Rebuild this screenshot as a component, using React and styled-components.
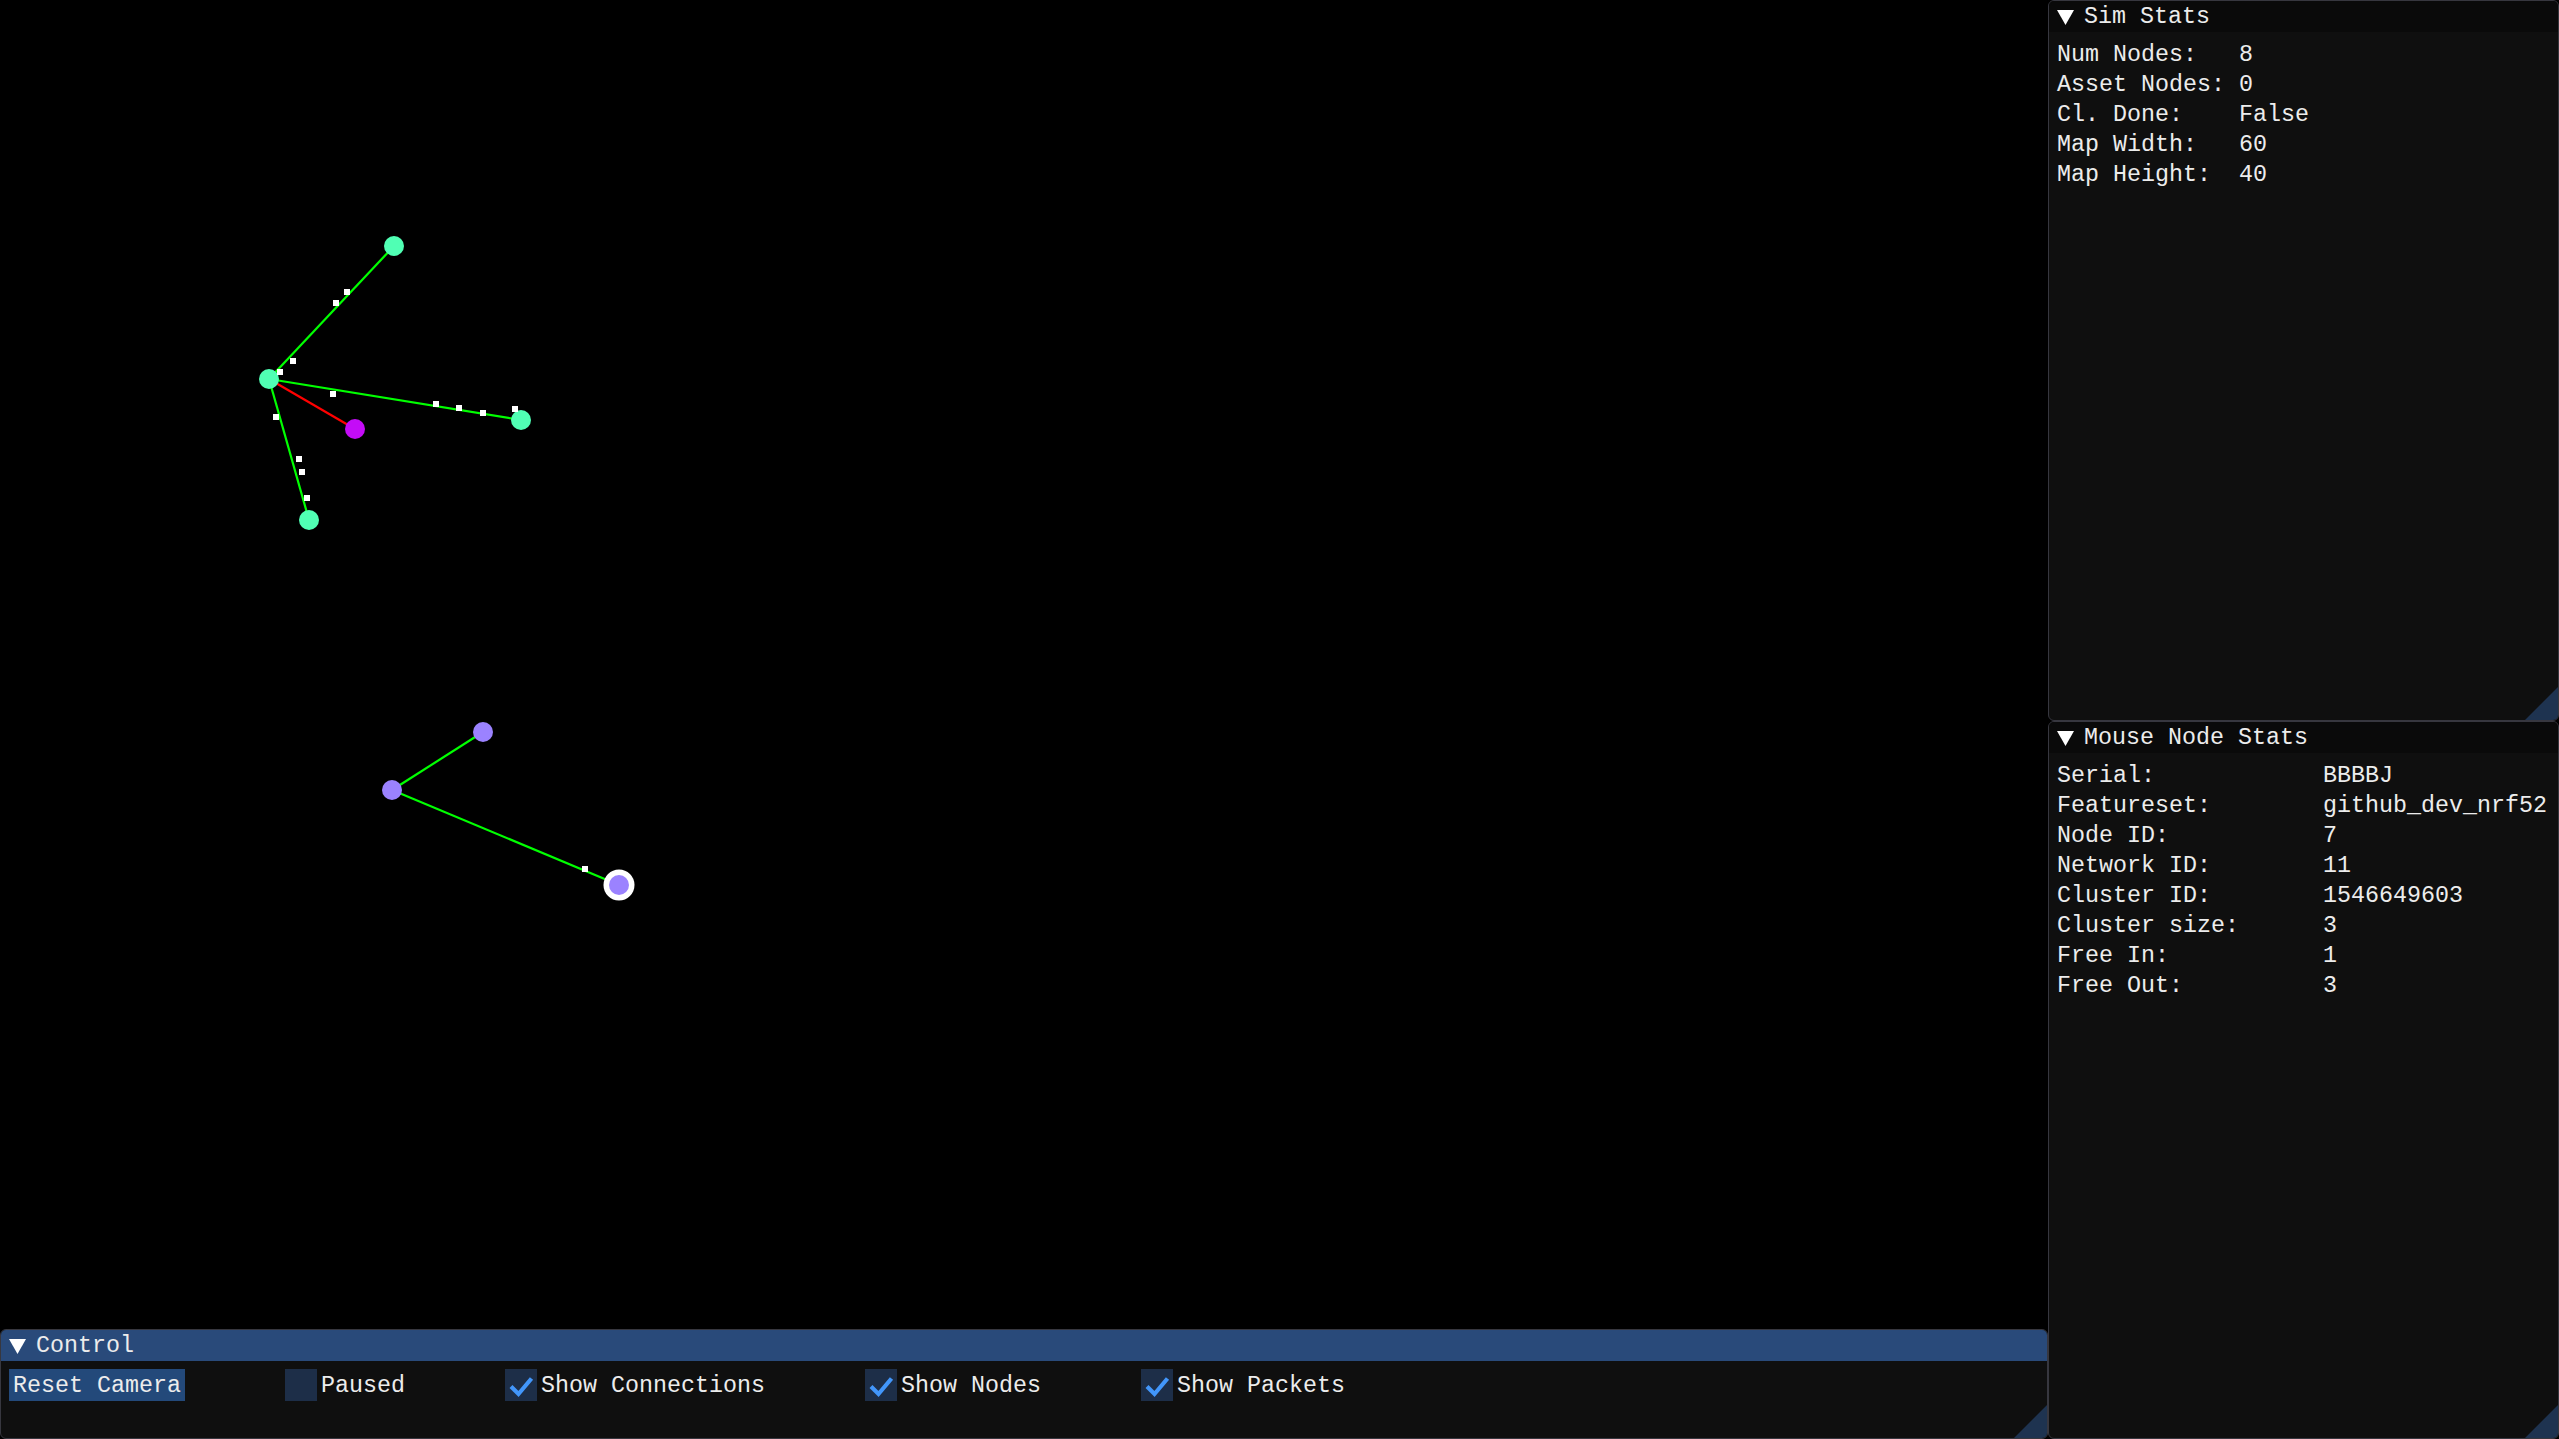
import React from 'react';
import styled, { createGlobalStyle } from 'styled-components';

const GlobalStyle = createGlobalStyle`
  html, body {
    margin: 0;
    padding: 0;
    background: #000;
    overflow: hidden;
  }
  body {
    font-family: "Liberation Mono", "DejaVu Sans Mono", monospace;
    font-size: 23.33px;
    color: #ececec;
  }
`;

const Screen = styled.div`
  width: 2559px;
  height: 1439px;
  display: grid;
  grid-template-columns: 2048px 511px;
  background: #000;
`;

const LeftColumn = styled.div`
  display: flex;
  flex-direction: column;
  min-height: 0;
`;

const RightColumn = styled.div`
  display: grid;
  grid-template-rows: 721px 718px;
`;

const Canvas = styled.div`
  flex: 1;
  background: #000;
  overflow: hidden;
  svg {
    display: block;
  }
`;

const Panel = styled.section`
  position: relative;
  background: #0f0f0f;
  border: 1px solid #37373f;
  border-radius: 6px;
  overflow: hidden;
  box-sizing: border-box;
  height: ${(p) => p.$height || '100%'};

  &::after {
    content: '';
    position: absolute;
    right: 0;
    bottom: 0;
    width: 33px;
    height: 33px;
    background: #1e3350;
    clip-path: polygon(100% 0, 100% 100%, 0 100%);
  }
`;

const TitleBar = styled.header`
  height: 31px;
  display: flex;
  align-items: center;
  gap: 10px;
  padding-left: 8px;
  padding-top: 1px;
  box-sizing: border-box;
  background: ${(p) => (p.$active ? '#294a7a' : '#0a0a0a')};
  white-space: pre;
`;

const Arrow = () => (
  <svg width="17" height="15" viewBox="0 0 17 15">
    <polygon points="0,0 17,0 8.5,15" fill="#ffffff" />
  </svg>
);

const StatsBody = styled.div`
  padding: 8px 8px;
  display: grid;
  grid-template-columns: ${(p) => p.$labelCh}ch auto;
  grid-auto-rows: 30px;
  align-items: center;
  white-space: pre;
`;

const ControlBody = styled.div`
  display: flex;
  align-items: center;
  gap: 100px;
  padding: 8px 8px;
`;

const Button = styled.button`
  height: 32px;
  padding: 2px 4px 0;
  border: none;
  background: #23497a;
  color: #ececec;
  font: inherit;
  white-space: pre;
`;

const CheckRow = styled.label`
  display: flex;
  align-items: center;
  gap: 4px;
  padding-top: 2px;
  white-space: pre;
`;

const Box = styled.span`
  width: 32px;
  height: 32px;
  margin-top: -2px;
  background: #1d2e48;
  display: block;
  svg {
    display: block;
  }
`;

const Check = () => (
  <svg width="32" height="32" viewBox="0 0 32 32">
    <polyline points="6,17.5 13.5,25 26.5,9.5" fill="none" stroke="#4296fa" strokeWidth="4.2" />
  </svg>
);

const Checkbox = ({ label, checked }) => (
  <CheckRow>
    <Box>{checked && <Check />}</Box>
    {label}
  </CheckRow>
);

const mint = '#50ffb4';
const purple = '#9b82ff';

const packets = [
  [346.7, 292], [336, 302.7], [292.7, 360.7], [280, 371.7], [333, 393.7],
  [436, 403.7], [458.7, 407.7], [482.7, 412.7], [515, 408.7], [276, 416.7],
  [299, 458.7], [301.7, 471.7], [306.7, 497.7], [585, 868.7],
];

const Graph = () => (
  <svg width="2048" height="1329" viewBox="0 0 2048 1329" shapeRendering="crispEdges">
    <g strokeWidth="2.2" shapeRendering="auto">
      <line x1="269" y1="379" x2="394" y2="246" stroke="#00ff00" />
      <line x1="269" y1="379" x2="521" y2="420" stroke="#00ff00" />
      <line x1="269" y1="379" x2="309" y2="520" stroke="#00ff00" />
      <line x1="269" y1="379" x2="355" y2="429" stroke="#ff0000" />
      <line x1="392" y1="790" x2="483" y2="732" stroke="#00ff00" />
      <line x1="392" y1="790" x2="619" y2="885" stroke="#00ff00" />
    </g>
    <g shapeRendering="auto">
      <circle cx="394" cy="246" r="10" fill={mint} />
      <circle cx="269" cy="379" r="10" fill={mint} />
      <circle cx="521" cy="420" r="10" fill={mint} />
      <circle cx="309" cy="520" r="10" fill={mint} />
      <circle cx="355" cy="429" r="10" fill="#c40cf7" />
      <circle cx="483" cy="732" r="10" fill={purple} />
      <circle cx="392" cy="790" r="10" fill={purple} />
      <circle cx="619" cy="885" r="15.5" fill="#ffffff" />
      <circle cx="619" cy="885" r="10" fill={purple} />
    </g>
    {packets.map(([x, y], i) => (
      <rect key={i} x={x - 3} y={y - 3} width="6" height="6" fill="#ffffff" />
    ))}
  </svg>
);

const simStats = [
  ['Num Nodes:', '8'],
  ['Asset Nodes:', '0'],
  ['Cl. Done:', 'False'],
  ['Map Width:', '60'],
  ['Map Height:', '40'],
];

const nodeStats = [
  ['Serial:', 'BBBBJ'],
  ['Featureset:', 'github_dev_nrf52'],
  ['Node ID:', '7'],
  ['Network ID:', '11'],
  ['Cluster ID:', '1546649603'],
  ['Cluster size:', '3'],
  ['Free In:', '1'],
  ['Free Out:', '3'],
];

const StatRows = ({ rows }) =>
  rows.map(([k, v]) => (
    <React.Fragment key={k}>
      <span>{k}</span>
      <span>{v}</span>
    </React.Fragment>
  ));

const App = () => {
  return (
    <>
      <GlobalStyle />
      <Screen>
        <LeftColumn>
          <Canvas>
            <Graph />
          </Canvas>
          <Panel $height="110px">
            <TitleBar $active>
              <Arrow />
              Control
            </TitleBar>
            <ControlBody>
              <Button>Reset Camera</Button>
              <Checkbox label="Paused" />
              <Checkbox label="Show Connections" checked />
              <Checkbox label="Show Nodes" checked />
              <Checkbox label="Show Packets" checked />
            </ControlBody>
          </Panel>
        </LeftColumn>
        <RightColumn>
          <Panel>
            <TitleBar>
              <Arrow />
              Sim Stats
            </TitleBar>
            <StatsBody $labelCh={13}>
              <StatRows rows={simStats} />
            </StatsBody>
          </Panel>
          <Panel>
            <TitleBar>
              <Arrow />
              Mouse Node Stats
            </TitleBar>
            <StatsBody $labelCh={19}>
              <StatRows rows={nodeStats} />
            </StatsBody>
          </Panel>
        </RightColumn>
      </Screen>
    </>
  );
};

export default App;
